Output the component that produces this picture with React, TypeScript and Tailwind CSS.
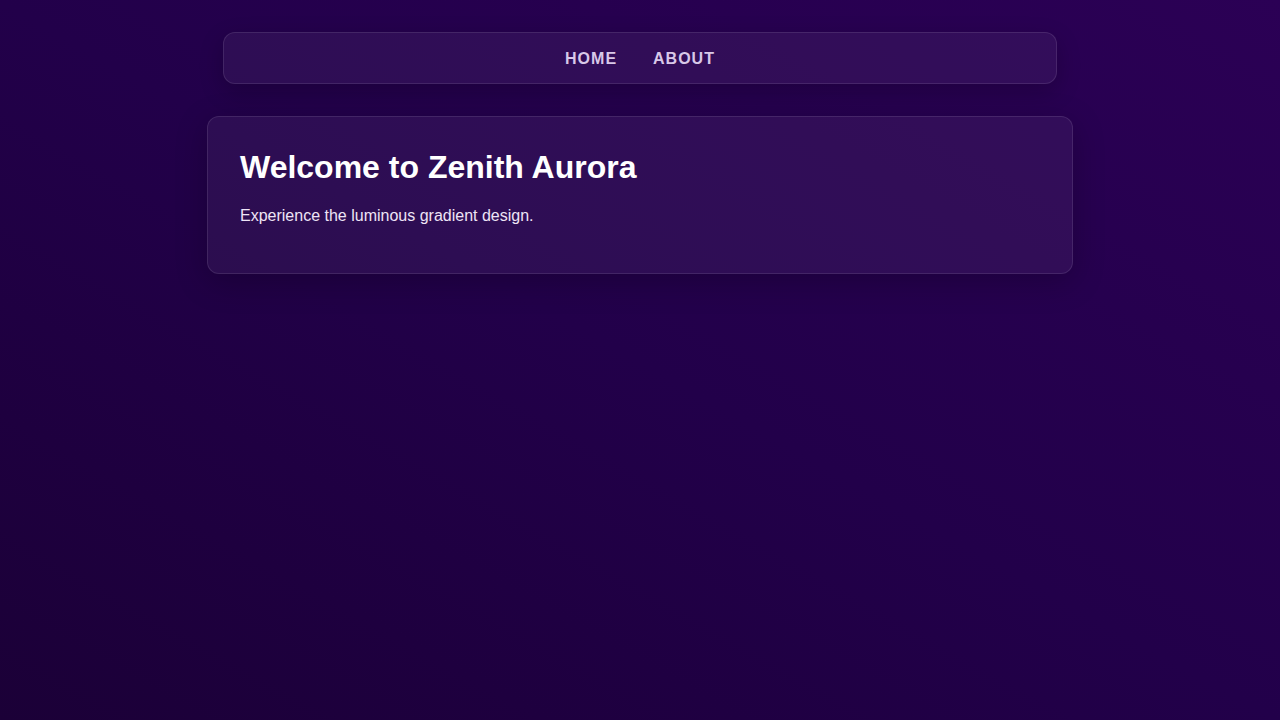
export default function App() {
  return (
    <div
      className="min-h-[720px] w-full bg-linear-to-tr from-[#1b0037] via-[#22004a] to-[#2b0055] pt-8"
      style={{ fontFamily: '"Liberation Sans", Arial, sans-serif' }}
    >
      <div className="mx-auto w-[866px]">
        <nav className="mx-4 flex justify-center gap-9 rounded-xl border border-white/10 bg-white/5 pt-[14px] pb-[12px] shadow-[0_8px_24px_rgba(0,0,0,0.2)]">
          <a className="text-base font-bold uppercase leading-6 tracking-[1px] text-[#d8c8e8]">Home</a>
          <a className="text-base font-bold uppercase leading-6 tracking-[1px] text-[#d8c8e8]">About</a>
        </nav>
        <main className="mt-8 rounded-xl border border-white/10 bg-white/5 p-8 shadow-[0_8px_32px_rgba(0,0,0,0.22)]">
          <h1 className="mb-[17px] text-[32px] font-bold leading-9 text-white">Welcome to Zenith Aurora</h1>
          <p className="mb-[11px] text-base leading-7 text-[#eee4f6]">Experience the luminous gradient design.</p>
        </main>
      </div>
    </div>
  );
}
